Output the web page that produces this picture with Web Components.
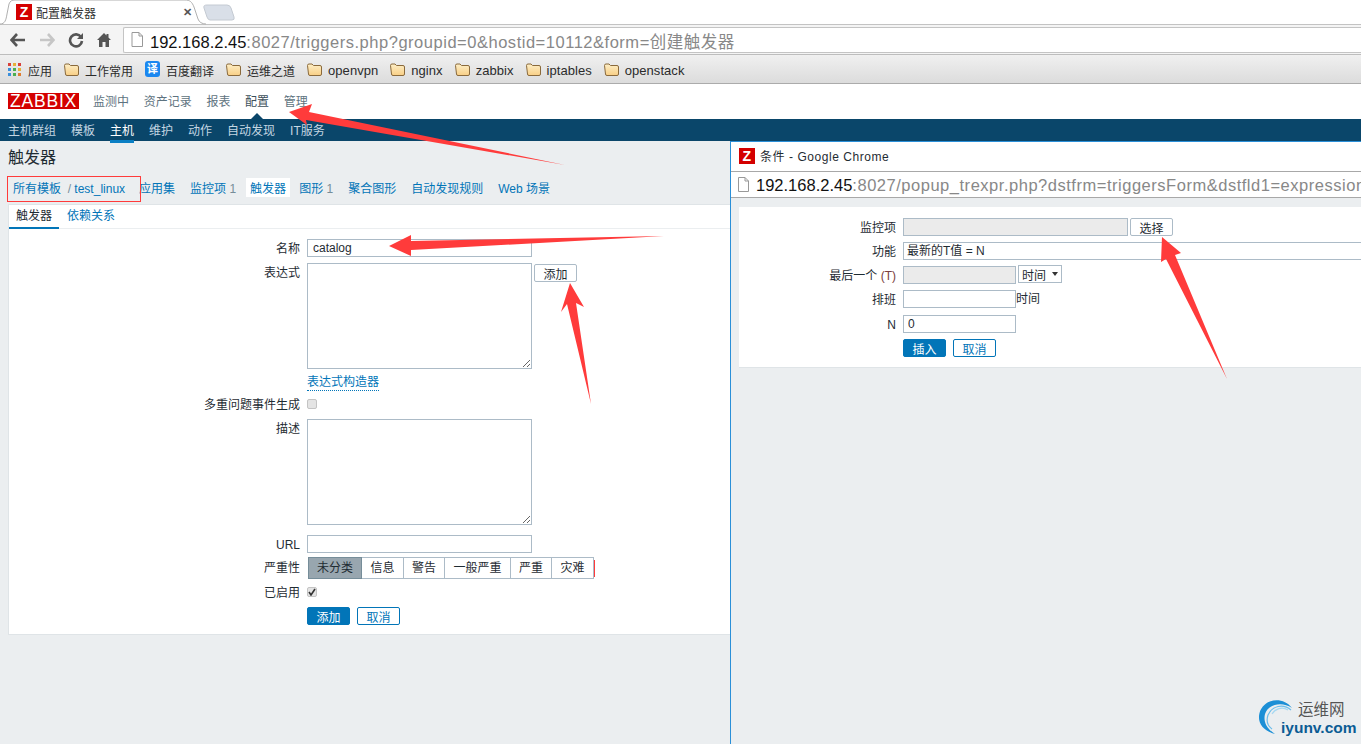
<!DOCTYPE html>
<html lang="zh">
<head>
<meta charset="utf-8">
<title>配置触发器</title>
<style>
  html, body { margin: 0; height: 100%; overflow: hidden; }
  body {
    position: relative;
    width: 1361px;
    height: 744px;
    background: #ebeef0;
    color: #1f2c33;
    font: 12px "Liberation Sans", "Noto Sans CJK SC", sans-serif;
  }
</style>
</head>
<body>
<browser-chrome>
  <book-mark kind="apps" latin="0">应用</book-mark>
  <book-mark latin="0">工作常用</book-mark>
  <book-mark kind="fanyi" latin="0">百度翻译</book-mark>
  <book-mark latin="0">运维之道</book-mark>
  <book-mark>openvpn</book-mark>
  <book-mark>nginx</book-mark>
  <book-mark>zabbix</book-mark>
  <book-mark>iptables</book-mark>
  <book-mark>openstack</book-mark>
</browser-chrome>
<zbx-header></zbx-header>
<zbx-page></zbx-page>
<popup-window></popup-window>
<red-annotations></red-annotations>
<site-watermark></site-watermark>

<script>
const colors = {
  link: "#0275b8",
  text: "#1f2c33",
  muted: "#768d99",
  border: "#acbbc7",
  navy: "#0a466a",
  page: "#ebeef0",
};

const fieldStyles = /*css*/ `
  input, textarea {
    box-sizing: border-box;
    display: block;
    margin: 0;
    padding: 0 4px;
    border: 1px solid ${colors.border};
    background: #fff;
    color: ${colors.text};
    font: 12px "Liberation Sans", "Noto Sans CJK SC", sans-serif;
    border-radius: 0;
    outline: none;
  }
  input { height: 18px; }
  input:disabled { background: #ebebeb; }
  .btn {
    box-sizing: border-box;
    display: inline-flex;
    align-items: center;
    justify-content: center;
    width: 43px;
    height: 18px;
    border: 1px solid ${colors.link};
    border-radius: 2px;
    background: #fff;
    color: ${colors.link};
  }
  .btn.primary { background: ${colors.link}; color: #fff; }
  .btn.plain { border-color: ${colors.border}; color: ${colors.text}; }
  .actions { display: flex; gap: 7px; }
  .inline { display: flex; align-items: flex-start; }
  .check {
    box-sizing: border-box;
    display: flex;
    align-items: center;
    justify-content: center;
    width: 10px;
    height: 10px;
    margin: 4px 0 0 0;
    border: 1px solid #c4c4c4;
    border-radius: 2px;
    background: #e4e4e4;
  }
`;

function folderIcon() {
  return `<svg width="15" height="15" viewBox="0 0 15 15">
    <defs><linearGradient id="f" x1="0" y1="0" x2="0" y2="1"><stop offset="0" stop-color="#fdeec6"/><stop offset="1" stop-color="#f8cf86"/></linearGradient></defs>
    <path d="M.5 3.5a1.5 1.5 0 0 1 1.5-1.5h3l1.5 1.5h6.5a1.5 1.5 0 0 1 1.5 1.5v7a1.5 1.5 0 0 1-1.5 1.5h-10a1.5 1.5 0 0 1-1.5-1.5z" fill="url(#f)" stroke="#8a6a3c"/>
  </svg>`;
}

function appsIcon() {
  const cells = ["#d9403a", "#e8b13a", "#d9403a", "#3a8fdc", "#4caf50", "#e8b13a", "#3a8fdc", "#4caf50", "#e07b2e"];
  const rects = cells
    .map((c, i) => `<rect x="${(i % 3) * 5}" y="${Math.floor(i / 3) * 5}" width="3" height="3" fill="${c}"/>`)
    .join("");
  return `<svg width="13" height="13" viewBox="0 0 13 13" style="margin-right:1px">${rects}</svg>`;
}

class BookMark extends HTMLElement {
  constructor() {
    super();
    const kind = this.getAttribute("kind");
    const latin = this.getAttribute("latin") !== "0";
    let icon = folderIcon();
    if (kind === "apps") icon = appsIcon();
    if (kind === "fanyi") icon = `<span class="fanyi">译</span>`;
    this.attachShadow({ mode: "open" });
    this.shadowRoot.innerHTML = /*html*/ `
      <style>
        :host { display: inline-flex; align-items: center; gap: 6px; height: 28px; color: #2b2b2b; font-size: ${latin ? "13px" : "12px"}; letter-spacing: ${latin ? ".05px" : "0"}; white-space: nowrap; }
        svg { display: block; flex: none; }
        .text { padding-top: 2px; }
        .fanyi { width: 15px; height: 16px; border-radius: 3px; background: #1b87f0; color: #fff; font-size: 11px; line-height: 16px; text-align: center; font-weight: bold; }
      </style>
      ${icon}<span class="text"><slot></slot></span>`;
  }
}

class BrowserChrome extends HTMLElement {
  constructor() {
    super();
    this.attachShadow({ mode: "open" });
    this.shadowRoot.innerHTML = /*html*/ `
      <style>
        :host { display: block; height: 85px; background: #fff; }
        .strip { position: relative; height: 24px; border-bottom: 1px solid #c3c3c3; box-sizing: content-box; }
        .tab-shape { position: absolute; left: 0; top: 0; }
        .tab { position: relative; display: flex; align-items: center; height: 24px; padding-left: 16px; width: 176px; }
        .fav { width: 16px; height: 16px; margin-right: 4px; background: #d40000; color: #fff; font: bold 14px/16px "Liberation Sans", sans-serif; text-align: center; }
        .tab-title { flex: 1; color: #333; }
        .close { color: #555; font-size: 11px; font-weight: bold; }
        .tool { display: flex; align-items: center; height: 30px; padding-left: 10px; background: #f4f4f4; box-sizing: border-box; border-bottom: 1px solid #bdbdbd; }
        .tool svg { display: block; flex: none; }
        .btns { display: flex; gap: 13px; width: 113px; align-items: center; }
        .omni { flex: 1; display: flex; align-items: center; height: 26px; box-sizing: border-box; border: 1px solid #c4c4c4; border-right: 0; background: #fff; padding-left: 7px; font-size: 16.5px; color: #888; white-space: nowrap; border-radius: 2px 0 0 2px; }
        .omni svg { margin-right: 7px; }
        .omni span { padding-top: 2px; letter-spacing: .52px; }
        .omni b { font-weight: normal; color: #111; letter-spacing: 0; }
        .marks { display: flex; align-items: center; gap: 12px; height: 28px; padding-left: 8px; background: linear-gradient(#f0f0f0, #dcdcdc); border-bottom: 1px solid #ababab; }
      </style>
      <div class="strip">
        <svg class="tab-shape" width="240" height="25" viewBox="0 0 240 25">
          <path d="M0 24 C5 24 6 20 7 14 L9 4 C10 1 12 0 15 0 L185 0 C190 0 192 2 194 7 L198 19 C199 22 202 24 206 24" fill="#fff" stroke="#b0b0b0"/>
          <path d="M207 5 h20 q3 0 4 3 l3 9 q1 3 -2 3 h-22 q-2 0 -3 -3 l-3 -9 q-1 -3 3 -3z" fill="#d9dfe8" stroke="#c4cad2"/>
        </svg>
        <div class="tab">
          <div class="fav">Z</div>
          <div class="tab-title">配置触发器</div>
          <div class="close">✕</div>
        </div>
      </div>
      <div class="tool">
        <div class="btns">
          <svg width="16" height="14" viewBox="0 0 16 14"><path d="M7 1 L1.5 7 L7 13 M2 7 H15" fill="none" stroke="#555" stroke-width="2.6"/></svg>
          <svg width="16" height="14" viewBox="0 0 16 14"><path d="M9 1 L14.5 7 L9 13 M14 7 H1" fill="none" stroke="#c6c6c6" stroke-width="2.6"/></svg>
          <svg width="16" height="16" viewBox="0 0 16 16"><path d="M13 5 A6 6 0 1 0 14 9" fill="none" stroke="#555" stroke-width="2.6"/><path d="M15 1 V7 H9z" fill="#555"/></svg>
          <svg width="14" height="14" viewBox="0 0 14 14"><path d="M7 0 L0 7 H2 V14 H5.5 V9 H8.5 V14 H12 V7 H14 L11.5 4.5 V1 H9.5 V2.5z" fill="#555"/></svg>
        </div>
        <div class="omni">
          <svg width="12" height="15" viewBox="0 0 12 15"><path d="M1 .5 H8 L11.5 4 V14.5 H1z M8 .5 V4 H11.5" fill="#fff" stroke="#999"/></svg>
          <span><b>192.168.2.45</b>:8027/triggers.php?groupid=0&amp;hostid=10112&amp;form=创建触发器</span>
        </div>
      </div>
      <div class="marks"><slot></slot></div>`;
  }
}

class ZbxHeader extends HTMLElement {
  constructor() {
    super();
    this.attachShadow({ mode: "open" });
    this.shadowRoot.innerHTML = /*html*/ `
      <style>
        :host { display: block; }
        .top { position: relative; display: flex; align-items: flex-start; height: 34px; padding-left: 8px; background: #fff; }
        .logo { width: 71px; height: 16px; margin: 8px 14px 0 0; background: #d40000; color: #fff; font: 17.5px/17px "Liberation Sans", sans-serif; letter-spacing: .8px; text-align: center; }
        .menu { display: flex; gap: 14.7px; color: #5e7380; line-height: 18px; margin-top: 8px; }
        .menu .on { color: #3c4f5a; position: relative; }
        .menu .on::after { content: ""; position: absolute; left: 6px; top: 20px; border: 6px solid transparent; border-top: 0; border-bottom-color: ${colors.navy}; }
        .sub { display: flex; gap: 15px; height: 22px; padding-left: 8px; background: ${colors.navy}; color: #c4d6e2; line-height: 24px; }
        .sub .on { position: relative; color: #fff; }
        .sub .on::after { content: ""; position: absolute; left: 0; right: 0; bottom: -2px; height: 3px; background: #0a7fc4; }
      </style>
      <div class="top">
        <div class="logo">ZABBIX</div>
        <div class="menu"><span>监测中</span><span>资产记录</span><span>报表</span><span class="on">配置</span><span>管理</span></div>
      </div>
      <div class="sub"><span>主机群组</span><span>模板</span><span class="on">主机</span><span>维护</span><span>动作</span><span>自动发现</span><span>IT服务</span></div>`;
  }
}

class FormRow extends HTMLElement {
  constructor() {
    super();
    this.attachShadow({ mode: "open" });
    this.shadowRoot.innerHTML = /*html*/ `
      <style>
        :host { display: grid; grid-template-columns: var(--label-w, 291px) 1fr; column-gap: 7px; margin-bottom: var(--row-gap, 6px); }
        .label { box-sizing: border-box; height: 18px; padding-top: 1px; text-align: right; line-height: 18px; color: ${colors.text}; white-space: nowrap; }
        .field { min-width: 0; }
      </style>
      <div class="label"><slot name="label"></slot></div>
      <div class="field"><slot></slot></div>`;
  }
}

class SeverityGroup extends HTMLElement {
  constructor() {
    super();
    const items = ["未分类", "信息", "警告", "一般严重", "严重", "灾难"];
    const widths = [54, 42, 41, 66, 41, 42];
    this.attachShadow({ mode: "open" });
    this.shadowRoot.innerHTML = /*html*/ `
      <style>
        :host { display: flex; margin-left: 1px; }
        span { box-sizing: border-box; height: 22px; line-height: 21px; border: 1px solid ${colors.border}; border-left-width: 0; background: #fff; white-space: nowrap; text-align: center; }
        span:first-of-type { border-left-width: 1px; background: #98a6af; border-color: ${colors.muted}; }
      </style>
      ${items.map((t, i) => `<span style="width:${widths[i]}px">${t}</span>`).join("")}`;
  }
}

class ZbxPage extends HTMLElement {
  constructor() {
    super();
    this.attachShadow({ mode: "open" });
    this.shadowRoot.innerHTML = /*html*/ `
      <style>
        ${fieldStyles}
        :host { display: block; padding-left: 8px; }
        h1 { margin: 0; height: 30px; font: normal 16px/33px "Liberation Sans", "Noto Sans CJK SC", sans-serif; color: ${colors.text}; }
        .crumbs { display: flex; align-items: center; height: 33px; color: ${colors.link}; white-space: nowrap; }
        .crumbs .muted { color: ${colors.muted}; }
        .crumbs > span { margin-right: 15px; }
        .crumbs .root { margin: 0 14px 0 5px; }
        .crumbs .sel { background: #fff; padding: 1px 4px; margin: 0 9px 0 -5px; color: ${colors.link}; }
        .panel { box-sizing: border-box; width: 760px; height: 431px; background: #fff; border: 1px solid #dfe4e7; }
        .tabs { display: flex; height: 23px; padding-left: 0; gap: 8px; border-bottom: 1px solid #ebeef0; color: ${colors.link}; line-height: 23px; }
        .tabs .on { position: relative; width: 50px; text-align: center; color: ${colors.text}; }
        .tabs .on::after { content: ""; position: absolute; left: 0; right: 0; bottom: -1px; height: 2px; background: ${colors.link}; }
        form { display: block; padding-top: 10px; }
        .wide { width: 225px; }
        input.wide { padding-left: 5px; }
        textarea { height: 106px; }
        .builder { display: inline-block; line-height: 15px; color: ${colors.link}; border-bottom: 1px dotted ${colors.link}; }
      </style>
      <h1>触发器</h1>
      <div class="crumbs">
        <span class="root">所有模板 <span class="muted">&nbsp;/&nbsp;</span>test_linux</span>
        <span>应用集</span>
        <span>监控项 <span class="muted">1</span></span>
        <span class="sel">触发器</span>
        <span>图形 <span class="muted">1</span></span>
        <span>聚合图形</span>
        <span>自动发现规则</span>
        <span>Web 场景</span>
      </div>
      <div class="panel">
        <div class="tabs"><span class="on">触发器</span><span>依赖关系</span></div>
        <form>
          <form-row><span slot="label">名称</span><input class="wide" value="catalog"></form-row>
          <form-row><span slot="label">表达式</span>
            <div class="inline"><textarea class="wide"></textarea><span class="btn plain" style="margin:1px 0 0 2px">添加</span></div>
          </form-row>
          <form-row style="--row-gap:2px"><span slot="label"></span><span class="builder">表达式构造器</span></form-row>
          <form-row><span slot="label">多重问题事件生成</span><span class="check"></span></form-row>
          <form-row style="--row-gap:10px"><span slot="label">描述</span><textarea class="wide"></textarea></form-row>
          <form-row style="--row-gap:4px"><span slot="label">URL</span><input class="wide"></form-row>
          <form-row style="--row-gap:4px"><span slot="label" style="line-height:20px;display:block">严重性</span><severity-group></severity-group></form-row>
          <form-row><span slot="label">已启用</span>
            <span class="check"><svg width="8" height="8" viewBox="0 0 8 8"><path d="M1 4 L3 7 L7 1" fill="none" stroke="#333" stroke-width="1.6"/></svg></span>
          </form-row>
          <form-row><span slot="label"></span><div class="actions"><span class="btn primary">添加</span><span class="btn">取消</span></div></form-row>
        </form>
      </div>`;
  }
}

class PopupWindow extends HTMLElement {
  constructor() {
    super();
    this.attachShadow({ mode: "open" });
    this.shadowRoot.innerHTML = /*html*/ `
      <style>
        ${fieldStyles}
        :host { position: absolute; left: 730px; top: 141px; right: 0; bottom: 0; box-sizing: border-box; border: 1px solid #2a8fd8; border-width: 1px 0 0 1px; background: ${colors.page}; overflow: hidden; }
        .title { display: flex; align-items: center; height: 30px; padding: 0 0 2px 8px; background: #fff; border-bottom: 1px solid #a8a8a8; box-sizing: border-box; white-space: nowrap; letter-spacing: .55px; }
        .fav { width: 16px; height: 16px; margin-right: 5px; background: #d40000; color: #fff; font: bold 14px/16px "Liberation Sans", sans-serif; text-align: center; }
        .url { display: flex; align-items: center; height: 26px; padding-left: 7px; background: #fff; border-bottom: 1px solid #a8a8a8; box-sizing: border-box; font-size: 16.5px; color: #888; white-space: nowrap; }
        .url svg { margin-right: 7px; flex: none; }
        .url span { padding-top: 2px; letter-spacing: .52px; }
        .url b { font-weight: normal; color: #111; letter-spacing: 0; }
        .card { box-sizing: border-box; width: 700px; height: 161px; margin: 9px 0 0 8px; padding-top: 11px; background: #fff; border: 1px solid #dfe4e7; border-width: 0 0 1px 0; --label-w: 157px; }
        .card input.short { width: 113px; }
        .dis { width: 225px; }
        .sel { box-sizing: border-box; display: flex; align-items: center; justify-content: space-between; width: 44px; height: 18px; margin: -1px 0 0 2px; padding: 0 3px; border: 1px solid ${colors.border}; }
        .sel i { border: 3px solid transparent; border-top: 4px solid #333; border-bottom: 0; }
        .fn { box-sizing: border-box; width: 560px; height: 18px; line-height: 17px; padding-left: 3px; border: 1px solid ${colors.border}; }
        .lbl-t { color: #7a3d3d; }
        .after { line-height: 19px; }
      </style>
      <div class="title"><div class="fav">Z</div><span>条件 - Google Chrome</span></div>
      <div class="url">
        <svg width="11" height="15" viewBox="0 0 11 15"><path d="M.5 .5 H7 L10.5 4 V14.5 H.5z M7 .5 V4 H10.5" fill="#fff" stroke="#999"/></svg>
        <span><b>192.168.2.45</b>:8027/popup_trexpr.php?dstfrm=triggersForm&amp;dstfld1=expression</span>
      </div>
      <div class="card">
        <form-row><span slot="label">监控项</span><div class="inline"><input class="dis" disabled><span class="btn plain" style="margin-left:2px">选择</span></div></form-row>
        <form-row><span slot="label">功能</span><div class="fn">最新的T值 = N</div></form-row>
        <form-row style="margin-top:1px"><span slot="label">最后一个 <span class="lbl-t">(T)</span></span><div class="inline"><input class="short" disabled><div class="sel"><span>时间</span><i></i></div></div></form-row>
        <form-row><span slot="label">排班</span><div class="inline"><input class="short"><span class="after">时间</span></div></form-row>
        <form-row><span slot="label">N</span><input class="short" value="0"></form-row>
        <form-row><span slot="label"></span><div class="actions"><span class="btn primary">插入</span><span class="btn">取消</span></div></form-row>
      </div>`;
  }
}

// red marks drawn over the screenshot, free canvas
class RedAnnotations extends HTMLElement {
  constructor() {
    super();
    this.attachShadow({ mode: "open" });
    this.shadowRoot.innerHTML = /*html*/ `
      <style>
        :host { position: absolute; left: 0; top: 0; width: 1361px; height: 744px; pointer-events: none; }
        svg { display: block; }
      </style>
      <svg width="1361" height="744" viewBox="0 0 1361 744" fill="#ff3b3b">
        <rect x="7.5" y="176.5" width="133" height="25" fill="none" stroke="#ff3b3b"/>
        <rect x="594" y="560" width="1" height="17"/>
        <polygon points="289,112 312,104 309,112 565,165 306,120 307,125"/>
        <polygon points="389,246 411,235 411,241 664,236 411,250 411,256"/>
        <polygon points="570,283 584,307 576,303 591,404 567,304 561,312"/>
        <polygon points="1162,237 1181,253 1175,255 1227,379 1166,259 1161,262"/>
      </svg>`;
  }
}

class SiteWatermark extends HTMLElement {
  constructor() {
    super();
    this.attachShadow({ mode: "open" });
    this.shadowRoot.innerHTML = /*html*/ `
      <style>
        :host { position: absolute; left: 1258px; top: 697px; width: 103px; height: 47px; white-space: nowrap; }
        svg { position: absolute; left: 0; top: 0; }
        .cn { position: absolute; left: 40px; top: 4px; font-size: 15.5px; line-height: 18px; color: #555; }
        .en { position: absolute; left: 23px; top: 21px; font: bold 15.5px/20px "Liberation Sans", sans-serif; color: #0b5c94; }
      </style>
      <svg width="42" height="46" viewBox="0 0 42 46" fill="none">
        <path d="M34 11 C25 -1 6 1 1.5 16 C-1 26 5 34 17 37 C9 32 5 25 7 17 C10 7 24 4 34 11z" fill="#1c8fd6"/>
        <path d="M33 13 C25 6 14 9 10 18 C8 24 10 29 14 32" stroke="#6cbdea" stroke-width="1.2"/>
        <path d="M30 13 C24 9 17 12 14 17" stroke="#a6d8f2" stroke-width="1.2"/>
      </svg>
      <div class="cn">运维网</div>
      <div class="en">iyunv.com</div>`;
  }
}

customElements.define("book-mark", BookMark);
customElements.define("browser-chrome", BrowserChrome);
customElements.define("zbx-header", ZbxHeader);
customElements.define("form-row", FormRow);
customElements.define("severity-group", SeverityGroup);
customElements.define("zbx-page", ZbxPage);
customElements.define("popup-window", PopupWindow);
customElements.define("red-annotations", RedAnnotations);
customElements.define("site-watermark", SiteWatermark);
</script>
</body>
</html>
